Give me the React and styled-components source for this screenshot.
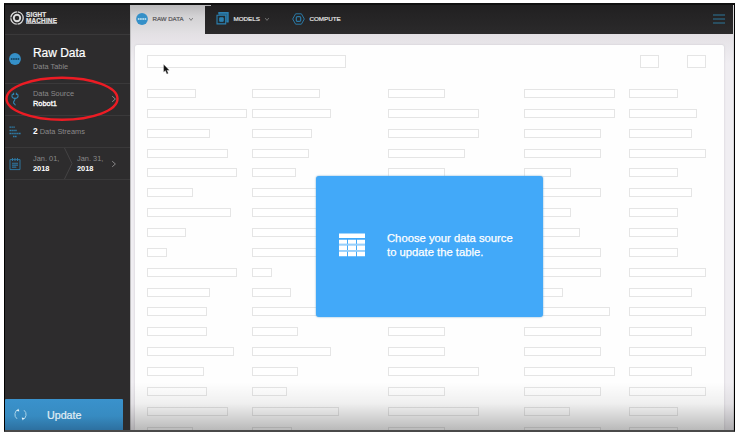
import React from 'react';
import styled, { createGlobalStyle } from 'styled-components';

const Global = createGlobalStyle`
  * { box-sizing: border-box; }
  body { margin: 0; background: #fff; font-family: "Liberation Sans", Arial, sans-serif; overflow: hidden; }
  svg { display: block; flex: none; }
`;

const Page = styled.div`
  width: 740px;
  height: 435px;
  padding: 3px 5px 3px 4px;
`;
const Frame = styled.div`
  position: relative;
  display: flex;
  width: 731px;
  height: 429px;
  border: 1px solid #000;
  border-top: 2px solid #111;
  border-bottom: 2px solid #4a4a4a;
  overflow: hidden;
`;
const Sidebar = styled.aside`
  display: flex;
  flex-direction: column;
  width: 125px;
  flex: none;
  background: #2d2c2d;
`;
const Brand = styled.div`
  display: flex;
  align-items: center;
  gap: 2px;
  height: 30px;
  padding: 0 0 3px 5px;
  border-bottom: 1px solid #3a393a;
  background: linear-gradient(#242324, #2c2b2c);
`;
const BrandName = styled.div`
  color: #e4e4e4;
  font-size: 6.4px;
  line-height: 5.7px;
  font-weight: bold;
  letter-spacing: 0.18px;
  -webkit-text-stroke: 0.2px #e4e4e4;
`;
const BrandLine = styled.div`
  width: max-content;
  border-bottom: ${(p) => (p.$rule ? '1px solid #aaa' : '0')};
`;
const Section = styled.div`
  display: flex;
  align-items: center;
  height: ${(p) => p.$h}px;
  padding-bottom: ${(p) => p.$lift || 0}px;
  border-bottom: 1px solid #3a393a;
`;
const IconCell = styled.div`
  display: flex;
  justify-content: center;
  width: 20px;
  margin-right: 8px;
`;
const Title = styled.div`
  color: #fff;
  font-size: 12px;
  line-height: 15px;
  letter-spacing: -0.05px;
  -webkit-text-stroke: 0.2px #fff;
`;
const Muted = styled.div`
  color: #8a898a;
  font-size: 7.4px;
  line-height: ${(p) => p.$lh || 10}px;
`;
const Strong = styled.div`
  color: #fff;
  font-size: 7.4px;
  line-height: 10px;
  font-weight: ${(p) => (p.$soft ? 'normal' : 'bold')};
  -webkit-text-stroke: ${(p) => (p.$soft ? '0.3px #fff' : '0')};
`;
const Count = styled.b`
  color: #fff;
  font-size: 8.4px;
`;
const Labels = styled.div`
  width: ${(p) => (p.$w ? `${p.$w}px` : 'auto')};
  white-space: nowrap;
`;
const Spacer = styled.div`
  flex: 1;
`;
const UpdateButton = styled.button`
  display: flex;
  align-items: center;
  gap: 20px;
  width: 118px;
  height: 31px;
  padding: 0 0 0 9px;
  border: 0;
  border-radius: 1px 1px 0 0;
  background: linear-gradient(#3a92cc, #378bc1 55%, #2d70a0);
  color: #e2eef5;
  font: 10.7px "Liberation Sans", Arial, sans-serif;
  -webkit-text-stroke: 0.2px #e2eef5;
`;
const Main = styled.main`
  display: flex;
  flex-direction: column;
  flex: 1;
  min-width: 0;
  background: linear-gradient(#e3e0e4 28px, #f0eef2 58px);
  border-left: 1px solid #bdbcbe;
  border-right: 1px solid #d8d7d9;
`;
const TopBar = styled.nav`
  display: flex;
  height: 29px;
  flex: none;
`;
const ActiveTab = styled.div`
  display: flex;
  align-items: center;
  width: 74px;
  padding: 0 0 2px 5px;
  background: linear-gradient(#bab9bb, #d3d2d4 40%, #e3e1e4);
`;
const Dark = styled.div`
  display: flex;
  align-items: center;
  flex: 1;
  padding: 0 8px 2px 11px;
  background: linear-gradient(#212021, #2b2a2b);
`;
const NavLabel = styled.span`
  margin-left: ${(p) => p.$ml}px;
  margin-right: ${(p) => p.$mr || 0}px;
  color: ${(p) => (p.$active ? '#555456' : '#e4e4e4')};
  font-size: ${(p) => (p.$active ? 6.1 : 6.25)}px;
  white-space: nowrap;
  -webkit-text-stroke: 0.2px ${(p) => (p.$active ? '#555456' : '#e4e4e4')};
`;
const NavGap = styled.div`
  width: 22px;
`;
const Panel = styled.section`
  flex: 1;
  min-height: 0;
  overflow: hidden;
  margin: 11px 9.5px 0 4px;
  padding: 10px 17.500px 0 12px;
  border-radius: 2px 2px 0 0;
  background: #fefefe;
  box-shadow: 0 0 2px #c5c3c8;
`;
const Box = styled.div`
  width: ${(p) => p.$w}px;
  height: ${(p) => p.$h || 9}px;
  border: 1px solid #e5e5e5;
  background: #fff;
`;
const Filters = styled.div`
  display: flex;
  justify-content: space-between;
  margin-bottom: 21px;
`;
const FilterPair = styled.div`
  display: flex;
  gap: 28px;
`;
const SkeletonRow = styled.div`
  display: grid;
  grid-template-columns: 105.3px 135.7px 135.7px 105.3px 90px;
  height: 19.87px;
  align-items: start;
`;
const Notice = styled.div`
  position: absolute;
  left: 311px;
  top: 171px;
  display: flex;
  align-items: center;
  gap: 22px;
  width: 227px;
  height: 141px;
  padding: 0 0 3px 23px;
  border-radius: 3px;
  background: #42a9f9;
  box-shadow: 0 0 2px #69a5cf;
  color: #fff;
  font-size: 11.25px;
  line-height: 14.3px;
  white-space: nowrap;
  -webkit-text-stroke: 0.25px #fff;
`;
const Shade = styled.div`
  position: absolute;
  left: 125px;
  right: 0;
  bottom: 0;
  height: 48px;
  background: linear-gradient(transparent, rgba(0, 0, 0, 0.06) 45%, rgba(0, 0, 0, 0.27));
  pointer-events: none;
`;
const Overlay = styled.div`
  position: absolute;
  left: ${(p) => p.$x}px;
  top: ${(p) => p.$y}px;
`;
const TabLip = styled.div`
  position: absolute;
  left: 200px;
  top: 0;
  width: 6px;
  height: 1px;
  background: #b5b4b6;
`;

const ROWS = [
  [49, 68, 57, 91, 49], [100, 79, 91, 91, 68], [63, 60, 91, 77, 63],
  [81, 57, 77, 77, 77], [90, 44, 57, 47, 49], [46, 79, 57, 77, 63],
  [84, 79, 57, 47, 49], [39, 79, 57, 56, 49], [20, 79, 57, 77, 49],
  [90, 20, 57, 77, 77], [63, 39, 57, 39, 63], [60, 79, 57, 86, 77],
  [60, 46, 57, 77, 63], [87, 79, 57, 77, 77], [57, 46, 91, 91, 63],
  [60, 35, 57, 77, 77], [81, 87, 91, 46, 49], [46, 40, 57, 77, 49],
];

const Chevron = ({ color = '#929192', down }) => (
  <svg width="6" height="8" viewBox="0 0 6 8" fill="none" stroke={color} strokeWidth="0.9">
    <path d={down ? 'M1.200 3l1.800 2.400L4.800 3' : 'M1.2 1.2L4.4 4 1.2 6.8'} />
  </svg>
);

const DotsIcon = ({ size, dot }) => (
  <svg width={size} height={size} viewBox="0 0 12 12">
    <circle cx="6" cy="6" r="5.9" fill="#3590c8" />
    <path d="M2 6h8" stroke={dot} strokeWidth="0.5" />
    <g fill={dot}>
      <circle cx="2.6" cy="6" r="0.9" />
      <circle cx="4.9" cy="6" r="0.9" />
      <circle cx="7.2" cy="6" r="0.9" />
      <circle cx="9.5" cy="6" r="0.9" />
    </g>
  </svg>
);

const LogoMark = () => (
  <svg width="14" height="14" viewBox="0 0 14 14" fill="none" stroke="#dcdcdc">
    <circle cx="7" cy="7" r="6.200" strokeWidth="1.300" strokeDasharray="8.940 0.800" />
    <circle cx="7" cy="7" r="3.200" strokeWidth="1.900" />
  </svg>
);

const SourceIcon = () => (
  <svg width="10" height="14" viewBox="0 0 10 14" fill="none" stroke="#3186b5" strokeWidth="1.1">
    <path d="M3.400 1.800C1.200 2.600 1.200 6.300 5 6.400 8.800 6.300 8.800 2.600 6.600 1.800" />
    <path d="M3.600 0.800v2.200M6.400 0.800v2.200M5 6.400C5 9.200 3.200 9.200 3.600 10.800 3.900 11.900 5.300 11.600 5.200 13.400" />
  </svg>
);

const StreamsIcon = () => (
  <svg width="12" height="12" viewBox="0 0 12 12" stroke="#2f7da9" strokeWidth="1.300" strokeDasharray="1.500 0.400">
    <path d="M0.500 1.200H6M0.500 4.500H8M0.500 7.500H12M4 10.500H8" />
  </svg>
);

const CalendarIcon = () => (
  <svg width="12" height="14" viewBox="0 0 12 14" fill="none" stroke="#2f7da9" strokeWidth="0.900">
    <path d="M1 2.600h10v10H1zM3.500 1v3M6 1v3M8.500 1v3" />
    <path d="M3 6.300h6M3 8.300h6M3 10.300h4.500M4 5.700v5.200M6 5.700v5.200M8 5.700v3.200" strokeWidth="0.700" />
  </svg>
);

const ModelsIcon = () => (
  <svg width="13" height="13" viewBox="0 0 13 13" fill="none" stroke="#2c80b0">
    <path d="M3 2.500V0.800h9v9h-1.500" strokeWidth="1.400" fill="#24658b" />
    <path d="M1 3.200h8.700v8.700H1z" strokeWidth="1.100" fill="#202b31" />
    <path d="M3.700 5.800h3.500v3.500H3.700z" fill="#2c80b0" />
  </svg>
);

const ComputeIcon = () => (
  <svg width="13" height="12" viewBox="0 0 13 12" fill="none" stroke="#2b79a5" strokeWidth="1">
    <path d="M3.600 0.800h5.800L12.300 6 9.400 11.200H3.600L0.700 6z" />
    <rect x="4.300" y="3.600" width="4.400" height="4.800" rx="1.200" strokeWidth="1.200" />
  </svg>
);

const MenuIcon = () => (
  <svg width="12" height="10" viewBox="0 0 12 10" stroke="#2c7699" strokeWidth="1.200">
    <path d="M0 1h12M0 5h12M0 9h12" />
  </svg>
);

const RefreshIcon = () => (
  <svg width="13" height="13" viewBox="0 0 13 13" fill="none" stroke="#a9d3e8" strokeWidth="1">
    <path d="M4.500 1.200A5.600 5.600 0 0 0 3 10.800M8.500 11.800A5.600 5.600 0 0 0 10 2.200" />
    <path d="M2.200 2.700l2.700-1.500.3 2.300zM10.800 10.300l-2.700 1.500-.3-2.300z" fill="#e1f0f6" stroke="none" />
  </svg>
);

const TableIcon = () => (
  <svg width="26" height="24" viewBox="0 0 26 24" fill="#fff">
    <path d="M0 .5h26V5H0z" />
    <path d="M0 6.700h8v4H0zM9 6.700h8v4H9zM18 6.700h8v4h-8zM0 12.500h8v4.500H0zM9 12.500h8V17H9zM18 12.500h8V17h-8zM0 18.800h8v4.500H0zM9 18.800h8v4.500H9zM18 18.800h8v4.500h-8z" />
    <path d="M0 10.700h26v1.800H0zM0 17h26v1.800H0z" opacity="0.450" />
  </svg>
);

export default function App() {
  return (
    <Page>
      <Global />
      <Frame>
        <Sidebar>
          <Brand>
            <LogoMark />
            <BrandName>
              <BrandLine>SIGHT</BrandLine>
              <BrandLine $rule>MACHINE</BrandLine>
            </BrandName>
          </Brand>
          <Section $h={49}>
            <IconCell><DotsIcon size={12} dot="#174968" /></IconCell>
            <Labels>
              <Title>Raw Data</Title>
              <Muted $lh={12}>Data Table</Muted>
            </Labels>
          </Section>
          <Section $h={32} $lift={2}>
            <IconCell><SourceIcon /></IconCell>
            <Labels $w={78}>
              <Muted>Data Source</Muted>
              <Strong $soft>Robot1</Strong>
            </Labels>
            <Chevron />
          </Section>
          <Section $h={32}>
            <IconCell><StreamsIcon /></IconCell>
            <Muted><Count>2</Count> Data Streams</Muted>
          </Section>
          <Section $h={32}>
            <IconCell><CalendarIcon /></IconCell>
            <Labels $w={31}>
              <Muted>Jan. 01,</Muted>
              <Strong>2018</Strong>
            </Labels>
            <svg width="9" height="31" viewBox="0 0 9 31" fill="none" stroke="#454445">
              <path d="M.5 0l7.500 15.500L.5 31" />
            </svg>
            <Spacer />
            <Labels $w={34}>
              <Muted>Jan. 31,</Muted>
              <Strong>2018</Strong>
            </Labels>
            <Chevron />
            <svg width="13" height="1" />
          </Section>
          <Spacer />
          <UpdateButton><RefreshIcon />Update</UpdateButton>
        </Sidebar>
        <Main>
          <TopBar>
            <ActiveTab>
              <DotsIcon size={12} dot="#b9dced" />
              <NavLabel $ml={4.5} $mr={4.5} $active>RAW DATA</NavLabel>
              <Chevron down color="#777" />
            </ActiveTab>
            <Dark>
              <ModelsIcon />
              <NavLabel $ml={4.5} $mr={4}>MODELS</NavLabel>
              <Chevron down color="#777" />
              <NavGap />
              <ComputeIcon />
              <NavLabel $ml={4.5}>COMPUTE</NavLabel>
              <Spacer />
              <MenuIcon />
            </Dark>
          </TopBar>
          <Panel>
            <Filters>
              <Box $w={199} $h={13} />
              <FilterPair>
                <Box $w={19} $h={13} />
                <Box $w={19} $h={13} />
              </FilterPair>
            </Filters>
            {ROWS.map((row, i) => (
              <SkeletonRow key={i}>
                {row.map((w, j) => <Box key={j} $w={w} />)}
              </SkeletonRow>
            ))}
          </Panel>
        </Main>
        <TabLip />
        <Notice>
          <TableIcon />
          <div>Choose your data source<br />to update the table.</div>
        </Notice>
        <Shade />
        <Overlay $x={0} $y={71}>
          <svg width="116" height="46" viewBox="0 0 116 46">
            <ellipse cx="57" cy="22.800" rx="55.500" ry="21" fill="none" stroke="#ec1c24" strokeWidth="2.400" />
          </svg>
        </Overlay>
        <Overlay $x={158} $y={59}>
          <svg width="7" height="11" viewBox="0 0 7 11">
            <path d="M.7.500v7.600l1.700-1.500 1.500 3.300 1.300-.6-1.400-3.100h2.500z" fill="#111" stroke="#aaa" strokeWidth="0.300" />
          </svg>
        </Overlay>
      </Frame>
    </Page>
  );
}
